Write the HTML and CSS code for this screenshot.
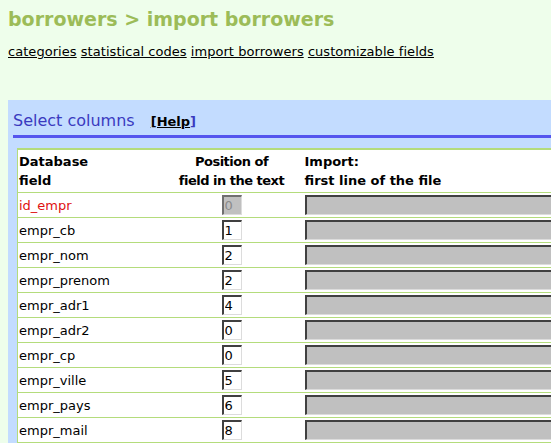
FILE: index.html
```html
<!DOCTYPE html>
<html>
<head>
<meta charset="utf-8">
<title>borrowers &gt; import borrowers</title>
<link rel="stylesheet" href="styles.css">
</head>
<body>
<h1 class="title">borrowers &gt; import borrowers</h1>
<div class="menu">
  <a href="#">categories</a> <a href="#">statistical codes</a> <a href="#">import borrowers</a> <a href="#">customizable fields</a>
</div>
<div class="panel">
  <div class="panel-head">
    <span class="panel-title">Select columns</span><span class="help"><a href="#">[Help</a>]</span>
  </div>
  <table class="cols">
    <colgroup><col class="c1"><col class="c2"><col class="c3"></colgroup>
    <thead>
      <tr><th class="h1">Database<br>field</th><th class="h2">Position of<br>field in the text</th><th class="h3">Import:<br>first line of the file</th></tr>
    </thead>
    <tbody>
      <tr><td class="name key">id_empr</td><td class="pos"><input class="num" type="text" value="0" disabled></td><td class="imp"><input class="line" type="text" disabled></td></tr>
      <tr><td class="name">empr_cb</td><td class="pos"><input class="num" type="text" value="1"></td><td class="imp"><input class="line" type="text" disabled></td></tr>
      <tr><td class="name">empr_nom</td><td class="pos"><input class="num" type="text" value="2"></td><td class="imp"><input class="line" type="text" disabled></td></tr>
      <tr><td class="name">empr_prenom</td><td class="pos"><input class="num" type="text" value="2"></td><td class="imp"><input class="line" type="text" disabled></td></tr>
      <tr><td class="name">empr_adr1</td><td class="pos"><input class="num" type="text" value="4"></td><td class="imp"><input class="line" type="text" disabled></td></tr>
      <tr><td class="name">empr_adr2</td><td class="pos"><input class="num" type="text" value="0"></td><td class="imp"><input class="line" type="text" disabled></td></tr>
      <tr><td class="name">empr_cp</td><td class="pos"><input class="num" type="text" value="0"></td><td class="imp"><input class="line" type="text" disabled></td></tr>
      <tr><td class="name">empr_ville</td><td class="pos"><input class="num" type="text" value="5"></td><td class="imp"><input class="line" type="text" disabled></td></tr>
      <tr><td class="name">empr_pays</td><td class="pos"><input class="num" type="text" value="6"></td><td class="imp"><input class="line" type="text" disabled></td></tr>
      <tr><td class="name">empr_mail</td><td class="pos"><input class="num" type="text" value="8"></td><td class="imp"><input class="line" type="text" disabled></td></tr>
    </tbody>
  </table>
</div>
</body>
</html>
```

FILE: styles.css
```css
html, body {
  overflow: hidden;
}
body {
  margin: 0;
  padding: 8px 0 0 8px;
  background: #eefeeb;
  font-family: "DejaVu Sans", Verdana, sans-serif;
  font-size: 13px;
  color: #000;
}
.title {
  margin: 0;
  font-size: 19px;
  font-weight: bold;
  color: #9cbc58;
  line-height: 22px;
}
.menu {
  margin-top: 14px;
  line-height: 15px;
}
.menu a {
  color: #000;
  text-decoration: underline;
  letter-spacing: 0.05px;
}
.panel {
  margin-top: 41px;
  width: 720px;
  background: #c3dcff;
  padding: 11px 0 40px 0;
}
.panel-head {
  margin-left: 5px;
  padding-bottom: 4px;
  border-bottom: 3px solid #5555ee;
  line-height: 19px;
}
.panel-title {
  font-size: 16px;
  color: #3a3abf;
}
.help {
  margin-left: 16px;
  font-weight: bold;
  color: #3a3abf;
}
.help a {
  color: #000;
  text-decoration: underline;
}
.cols {
  margin: 10px 0 0 9px;
  border-collapse: collapse;
  table-layout: fixed;
  width: 700px;
  background: #fff;
  border-top: 2px solid #b4dc7c;
  border-left: 1px solid #b4dc7c;
}
.c1 { width: 158px; }
.c2 { width: 112px; }
.c3 { width: 430px; }
.cols th {
  font-weight: bold;
  line-height: 19px;
  padding: 2px 0;
  vertical-align: middle;
  white-space: nowrap;
  border-bottom: 1px solid #b4dc7c;
}
.cols th.h1 { text-align: left; padding-left: 1px; }
.cols th.h2 { text-align: center; letter-spacing: -0.5px; overflow: visible; }
.cols th.h3 { text-align: left; padding-left: 17px; }
.cols td {
  height: 24px;
  padding: 0;
  vertical-align: middle;
  border-bottom: 1px solid #b4dc7c;
}
.cols td.name { padding-left: 1px; }
.cols td.key { color: #e01010; }
.cols td.pos { text-align: center; }
.cols td.imp { padding-left: 17px; }
input {
  font-family: "DejaVu Sans", Verdana, sans-serif;
  font-size: 13px;
  margin: 0;
  padding: 0 1px;
  box-sizing: border-box;
  height: 20px;
  vertical-align: middle;
  border-top: 2px solid #404040;
  border-left: 2px solid #404040;
  border-right: 1px solid #dcdcdc;
  border-bottom: 1px solid #dcdcdc;
  background: #fff;
  color: #000;
  outline: none;
}
.num {
  width: 20px;
}
.num:disabled {
  background: #c0c0c0;
  color: #8a8a8a;
  border-top-color: #707070;
  border-left-color: #707070;
}
.line {
  width: 420px;
  background: #c0c0c0;
}
```
